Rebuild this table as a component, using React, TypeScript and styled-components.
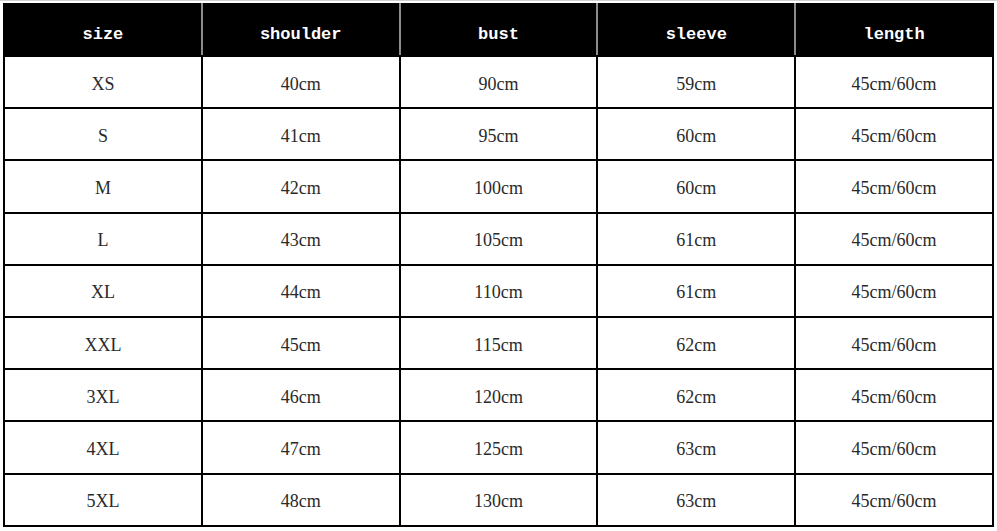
import { createGlobalStyle } from 'styled-components';
import styled from 'styled-components';

const GlobalStyle = createGlobalStyle`
  html, body {
    margin: 0;
    padding: 0;
    background: #ffffff;
  }
`;

const Page = styled.div`
  width: 997px;
  height: 531px;
  padding: 2px 3px 0 3px;
  box-sizing: border-box;
  border-top: 1px solid #d0d0d0;
`;

const Table = styled.table`
  width: 991px;
  border-collapse: collapse;
  table-layout: fixed;
  border: 2px solid #000;
`;

const HeadCell = styled.th`
  height: 42px;
  padding: 8px 0 0;
  background: #000;
  color: #fff;
  font-family: 'Liberation Mono', 'DejaVu Sans Mono', monospace;
  font-size: 17px;
  font-weight: bold;
  text-align: center;
  border-left: 2px solid #8c8c8c;
  border-bottom: 2px solid #000;

  &:first-child {
    border-left: 2px solid #000;
  }
`;

const Cell = styled.td`
  height: 46.2px;
  padding: 4px 0 0;
  color: #2a2a2a;
  font-family: 'Liberation Serif', 'DejaVu Serif', serif;
  font-size: 18px;
  text-align: center;
  border: 2px solid #000;
`;

const columns = ['size', 'shoulder', 'bust', 'sleeve', 'length'];

const rows = [
  ['XS', '40cm', '90cm', '59cm', '45cm/60cm'],
  ['S', '41cm', '95cm', '60cm', '45cm/60cm'],
  ['M', '42cm', '100cm', '60cm', '45cm/60cm'],
  ['L', '43cm', '105cm', '61cm', '45cm/60cm'],
  ['XL', '44cm', '110cm', '61cm', '45cm/60cm'],
  ['XXL', '45cm', '115cm', '62cm', '45cm/60cm'],
  ['3XL', '46cm', '120cm', '62cm', '45cm/60cm'],
  ['4XL', '47cm', '125cm', '63cm', '45cm/60cm'],
  ['5XL', '48cm', '130cm', '63cm', '45cm/60cm'],
];

const App = () => {
  return (
    <>
      <GlobalStyle />
      <Page>
        <Table>
          <thead>
            <tr>
              {columns.map((c) => (
                <HeadCell key={c}>{c}</HeadCell>
              ))}
            </tr>
          </thead>
          <tbody>
            {rows.map((r) => (
              <tr key={r[0]}>
                {r.map((v, i) => (
                  <Cell key={i}>{v}</Cell>
                ))}
              </tr>
            ))}
          </tbody>
        </Table>
      </Page>
    </>
  );
};

export default App;
